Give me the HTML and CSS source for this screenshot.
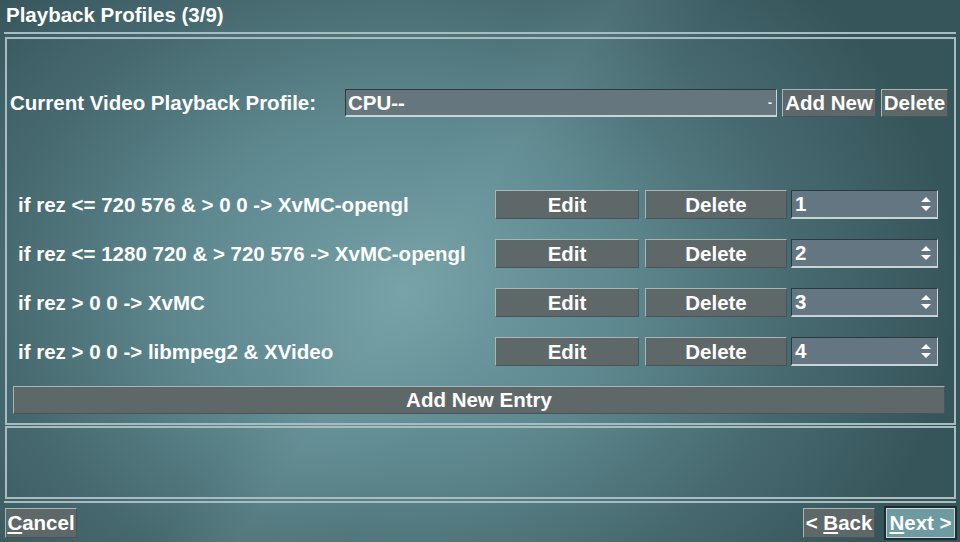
FILE: index.html
```html
<!DOCTYPE html>
<html>
<head>
<meta charset="utf-8">
<link rel="stylesheet" href="styles.css">
</head>
<body>
<div class="screen">
  <h1 class="title">Playback Profiles (3/9)</h1>
  <div class="rule-top"></div>
  <div class="panel main">
    <div class="profile-row">
      <span class="label">Current Video Playback Profile:</span>
      <div class="select"><span>CPU--</span><span class="sel-arrow">-</span></div>
      <button class="btn btn-add">Add New</button>
      <button class="btn btn-del">Delete</button>
    </div>
    <div class="rules">
      <div class="rule-row">
        <span class="rule-text">if rez &lt;= 720 576 &amp; &gt; 0 0 -&gt; XvMC-opengl</span>
        <button class="btn">Edit</button>
        <button class="btn">Delete</button>
        <div class="spin"><span>1</span><span class="arrows"><svg width="12" height="20" viewBox="0 0 12 20"><path d="M1 8 L6 3 L11 8 Z M1 12 L11 12 L6 17 Z" fill="#fff"/></svg></span></div>
      </div>
      <div class="rule-row">
        <span class="rule-text">if rez &lt;= 1280 720 &amp; &gt; 720 576 -&gt; XvMC-opengl</span>
        <button class="btn">Edit</button>
        <button class="btn">Delete</button>
        <div class="spin"><span>2</span><span class="arrows"><svg width="12" height="20" viewBox="0 0 12 20"><path d="M1 8 L6 3 L11 8 Z M1 12 L11 12 L6 17 Z" fill="#fff"/></svg></span></div>
      </div>
      <div class="rule-row">
        <span class="rule-text">if rez &gt; 0 0 -&gt; XvMC</span>
        <button class="btn">Edit</button>
        <button class="btn">Delete</button>
        <div class="spin"><span>3</span><span class="arrows"><svg width="12" height="20" viewBox="0 0 12 20"><path d="M1 8 L6 3 L11 8 Z M1 12 L11 12 L6 17 Z" fill="#fff"/></svg></span></div>
      </div>
      <div class="rule-row">
        <span class="rule-text">if rez &gt; 0 0 -&gt; libmpeg2 &amp; XVideo</span>
        <button class="btn">Edit</button>
        <button class="btn">Delete</button>
        <div class="spin"><span>4</span><span class="arrows"><svg width="12" height="20" viewBox="0 0 12 20"><path d="M1 8 L6 3 L11 8 Z M1 12 L11 12 L6 17 Z" fill="#fff"/></svg></span></div>
      </div>
    </div>
    <button class="btn btn-wide">Add New Entry</button>
  </div>
  <div class="panel lower"></div>
  <div class="rule-bottom"></div>
  <div class="footer">
    <button class="btn nav"><u>C</u>ancel</button>
    <div class="nav-right">
      <button class="btn nav">&lt; <u>B</u>ack</button>
      <button class="btn nav next"><u>N</u>ext &gt;</button>
    </div>
  </div>
</div>
</body>
</html>
```
FILE: styles.css
```css
* { box-sizing: border-box; }
html, body { margin: 0; padding: 0; }
body {
  width: 960px;
  height: 542px;
  overflow: hidden;
  font-family: "Liberation Sans", Arial, sans-serif;
  font-weight: bold;
  color: #fff;
}
.screen {
  width: 960px;
  height: 542px;
  background:
    linear-gradient(125deg, rgba(0,0,0,0) 40%, rgba(150,190,195,0.10) 46%, rgba(0,0,0,0) 54%),
    radial-gradient(ellipse 560px 440px at 400px 290px, #75a0a6 0%, #5f8990 38%, #46696f 72%, #36555b 100%),
    #36555b;
  display: flex;
  flex-direction: column;
}
.title {
  margin: 0;
  padding: 3px 0 0 6px;
  height: 31px;
  font-size: 20.5px;
  line-height: 24px;
  font-weight: bold;
}
.rule-top {
  margin: 1px 4px 0 4px;
  height: 2px;
  background: #a7bcbf;
}
.panel {
  margin: 0 4px 0 5px;
  border: 2px solid #a7bcbf;
}
.main {
  margin-top: 3px;
  height: 388px;
  padding: 50px 6px 0 3px;
  display: flex;
  flex-direction: column;
}
.lower {
  margin-top: 1px;
  height: 73px;
}
.rule-bottom {
  margin: 2px 4px 0 4px;
  height: 2px;
  background: #a7bcbf;
}
.profile-row {
  display: flex;
  align-items: center;
  height: 28px;
  gap: 5px;
}
.label {
  width: 330px;
  font-size: 20.5px;
}
.select {
  width: 432px;
  height: 28px;
  background: #66767e;
  border-top: 1px solid #2b3a3f;
  border-left: 1px solid #2b3a3f;
  border-bottom: 2px solid #c8d4d6;
  border-right: 1px solid #c8d4d6;
  display: flex;
  align-items: center;
  justify-content: space-between;
  padding: 0 4px 0 2px;
  font-size: 20.5px;
}
.sel-arrow { font-size: 12px; }
.btn {
  font-family: "Liberation Sans", Arial, sans-serif;
  font-weight: bold;
  color: #fff;
  background: #5f6869;
  border: 1px solid #a9b5b5;
  border-right-color: #48545a;
  border-bottom-color: #48545a;
  font-size: 20.5px;
  padding: 0;
  margin: 0;
  height: 28px;
  line-height: 26px;
  white-space: nowrap;
  cursor: default;
}
.btn-add { width: 94px; }
.btn-del { width: 67px; }
.rules {
  margin-top: 73px;
  padding-left: 8px;
  display: flex;
  flex-direction: column;
  gap: 20px;
}
.rule-row {
  display: grid;
  grid-template-columns: 472px 144px 143px 146px;
  column-gap: 5px;
  height: 29px;
  align-items: stretch;
}
.rule-row .btn { height: 29px; }
.rule-row .btn + .btn { margin-left: 1px; }
.rule-text {
  font-size: 20.5px;
  line-height: 29px;
  white-space: nowrap;
}
.spin {
  margin-left: -1px;
  background: #637681;
  border-top: 1px solid #2b3a3f;
  border-left: 1px solid #2b3a3f;
  border-bottom: 2px solid #c8d4d6;
  border-right: 1px solid #c8d4d6;
  display: flex;
  align-items: center;
  justify-content: space-between;
  padding: 0 5px 0 3px;
  font-size: 20.5px;
}
.arrows { display: flex; align-items: center; }
.btn-wide {
  margin: 20px 0 0 3px;
  width: 932px;
  height: 28px;
  text-align: center;
}
.footer {
  display: flex;
  justify-content: space-between;
  padding: 5px 5px 0 5px;
}
.nav {
  height: 30px;
  line-height: 28px;
  font-size: 20.5px;
  padding: 0;
}
.footer > .nav { width: 72px; }
.nav-right { display: flex; gap: 11px; }
.nav-right .nav:first-child { width: 72px; }
.next {
  width: 69px;
  background: #6e9aa2;
  border: 1px solid #c8d8da;
  outline: 2px solid #1f2c30;
}
u { text-decoration-thickness: 2px; text-underline-offset: 2px; }
```
